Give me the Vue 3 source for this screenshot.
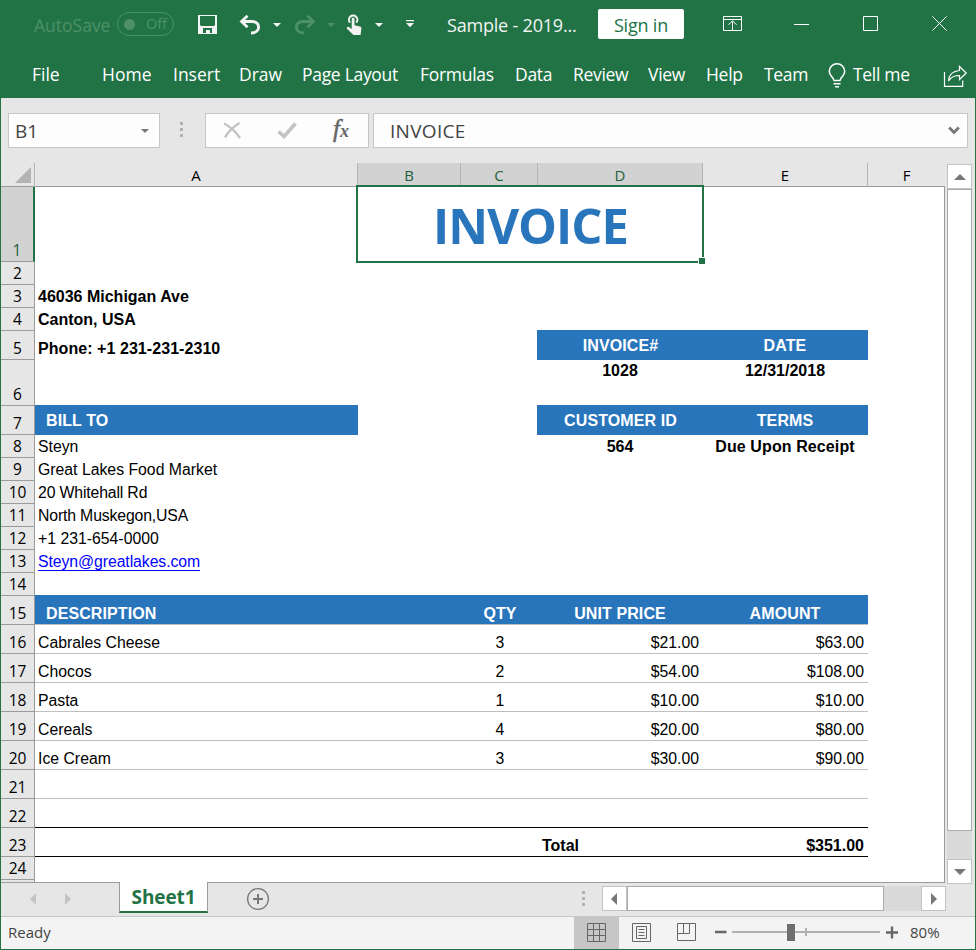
<script setup>
const tabs = [
  { name: 'File', w: 70 }, { name: 'Home', w: 71 }, { name: 'Insert', w: 66 },
  { name: 'Draw', w: 63 }, { name: 'Page Layout', w: 118, tight: true }, { name: 'Formulas', w: 95, tight: true },
  { name: 'Data', w: 58, tight: true }, { name: 'Review', w: 75, tight: true }, { name: 'View', w: 58, tight: true },
  { name: 'Help', w: 58, tight: true }, { name: 'Team', w: 64, tight: true }
]
const columns = ['A', 'B', 'C', 'D', 'E', 'F']

const blank = (n, h = 23) => ({ n, h, cells: [] })
const contact = (n, text, cls = '') => ({ n, h: 23, cells: [{ col: 'a', text, cls }] })
const item = (n, name, qty, price, amount) => ({
  n, h: 29, line: 'thin',
  cells: [
    { col: 'a', text: name }, { col: 'c', text: qty, cls: 'center' },
    { col: 'd', text: price, cls: 'right' }, { col: 'e', text: amount, cls: 'right' }
  ]
})
const rows = [
  { n: 1, h: 75, cells: [{ col: 'bd', text: 'INVOICE', cls: 'title' }] },
  blank(2),
  contact(3, '46036 Michigan Ave', 'bold'),
  contact(4, 'Canton, USA', 'bold'),
  { n: 5, h: 29, cells: [
    { col: 'a', text: 'Phone: +1 231-231-2310', cls: 'bold phone' },
    { col: 'd', text: 'INVOICE#', cls: 'fill edge center mid' },
    { col: 'e', text: 'DATE', cls: 'fill center mid' }
  ] },
  { n: 6, h: 46, cells: [
    { col: 'd', text: '1028', cls: 'bold center top' },
    { col: 'e', text: '12/31/2018', cls: 'bold center top' }
  ] },
  { n: 7, h: 29, cells: [
    { col: 'a', text: 'BILL TO', cls: 'fill indent mid' },
    { col: 'd', text: 'CUSTOMER ID', cls: 'fill edge center mid' },
    { col: 'e', text: 'TERMS', cls: 'fill center mid' }
  ] },
  { n: 8, h: 23, cells: [
    { col: 'a', text: 'Steyn' },
    { col: 'd', text: '564', cls: 'bold center' },
    { col: 'e', text: 'Due Upon Receipt', cls: 'bold center wide' }
  ] },
  contact(9, 'Great Lakes Food Market'),
  contact(10, '20 Whitehall Rd', 'narrow'),
  contact(11, 'North Muskegon,USA', 'narrow'),
  contact(12, '+1 231-654-0000'),
  contact(13, 'Steyn@greatlakes.com', 'mail'),
  blank(14),
  { n: 15, h: 29, line: 'thin', cells: [
    { col: 'a', text: 'DESCRIPTION', cls: 'fill indent' },
    { col: 'b', text: '', cls: 'fill' },
    { col: 'c', text: 'QTY', cls: 'fill center' },
    { col: 'd', text: 'UNIT PRICE', cls: 'fill center' },
    { col: 'e', text: 'AMOUNT', cls: 'fill center' }
  ] },
  item(16, 'Cabrales Cheese', '3', '$21.00', '$63.00'),
  item(17, 'Chocos', '2', '$54.00', '$108.00'),
  item(18, 'Pasta', '1', '$10.00', '$10.00'),
  item(19, 'Cereals', '4', '$20.00', '$80.00'),
  item(20, 'Ice Cream', '3', '$30.00', '$90.00'),
  { n: 21, h: 29, line: 'thin', cells: [] },
  { n: 22, h: 29, line: 'dark', cells: [] },
  { n: 23, h: 29, line: 'dark', cells: [
    { col: 'd', text: 'Total', cls: 'bold total' },
    { col: 'e', text: '$351.00', cls: 'bold right' }
  ] },
  blank(24)
]
</script>

<template>
  <div class="window">
    <header class="titlebar">
      <span class="autosave">AutoSave</span>
      <span class="toggle"><i></i><span>Off</span></span>
      <svg class="save" width="19" height="19" viewBox="0 0 19 19"><path d="M0 0h19v19H0z" fill="#f3f3f3" /><path d="M2 1h15v9l-1 1H3l-1-1zM5 13h9v5h-2v-3H8v3H5z" fill="#217346" /><path d="M9 15h2v3H9z" fill="#f3f3f3"/></svg>
      <svg class="undo" width="22" height="20" viewBox="0 0 22 20" fill="none" stroke="#f3f3f3" stroke-width="3"><path d="M2 6.500h11c9 0 9 11.500-1 11.500" /><path d="M8.500.8 2.500 6.500l6 5.700" stroke-width="2.800" /></svg>
      <svg class="caret c1" width="8" height="4" viewBox="0 0 8 4"><path d="M0 0h8L4 4z" fill="#f3f3f3" /></svg>
      <svg class="redo" width="22" height="20" viewBox="0 0 22 20" fill="none" stroke="#4d9068" stroke-width="3"><path d="M20 6.500H9C0 6.500 0 18 10 18" /><path d="m13.500.8 6 5.700-6 5.700" stroke-width="2.800" /></svg>
      <svg class="caret c2" width="8" height="4" viewBox="0 0 8 4"><path d="M0 0h8L4 4z" fill="#4d9068" /></svg>
      <svg class="touch" width="16" height="22" viewBox="0 0 16 22"><path d="M4 8.600a4.200 4.200 0 1 1 6.300 0" fill="none" stroke="#f3f3f3" stroke-width="2" /><path d="M5.700 5.200c0-1.900 2.800-1.900 2.800 0v6l5.500 1.200c1 .3 1.500.9 1.400 1.900L14.600 21H7.500L1 14.800c-.8-1.200.7-2.400 1.800-1.800l2.900 1.900z" fill="#f3f3f3" /></svg>
      <svg class="caret c3" width="8" height="4" viewBox="0 0 8 4"><path d="M0 0h8L4 4z" fill="#f3f3f3" /></svg>
      <svg class="more" width="8" height="8" viewBox="0 0 8 8"><path d="M0 0h8v1.300H0zM0 3h8L4 7.300z" fill="#f3f3f3" /></svg>
      <span class="doc">Sample - 2019...</span>
      <button class="signin">Sign in</button>
      <svg class="ribbon-opt" width="20" height="16" viewBox="0 0 20 16" fill="none" stroke="#fff"><path d="M.5.5h18v14H.5zM.5 3.500h18M9.500 14V5M5.500 8.800l4-4 4 4" /></svg>
      <svg class="mini" width="15" height="16" viewBox="0 0 15 16"><path d="M0 8.500h15" stroke="#fff" /></svg>
      <svg class="maxi" width="15" height="15" viewBox="0 0 15 15"><path d="M.5.5h14v14H.5z" fill="none" stroke="#fff" /></svg>
      <svg class="close" width="15" height="15" viewBox="0 0 15 15"><path d="m.4.4 14.200 14.200M14.600.4.4 14.600" stroke="#fff" /></svg>
    </header>
    <nav class="ribbon">
      <span v-for="t in tabs" :key="t.name" :style="{ width: t.w + 'px' }" :class="{ tight: t.tight }">{{ t.name }}</span>
      <svg class="bulb" width="18" height="26" viewBox="0 0 18 26" fill="none" stroke="#fff" stroke-width="1.600"><path d="M6 17.500C5.500 14 1.300 13 1.300 8.500a7.700 7.700 0 0 1 15.400 0c0 4.500-4.200 5.500-4.700 9zM5.500 20.700h7M7 23.700h4" /></svg>
      <span class="tell tight">Tell me</span>
      <svg class="share" width="25" height="23" viewBox="0 0 25 23" fill="none" stroke="#fff" stroke-width="1.200"><path d="M1.500 7v14.400h18.200v-6" /><path d="M16.500 1.500 23.200 8l-6.700 6.500v-4C11 10.500 8 12 5.500 16c.5-6 4-10 11-10.500z" /></svg>
    </nav>

    <div class="formula">
      <div class="box name"><span>B1</span><svg width="8" height="4" viewBox="0 0 8 4"><path d="M0 0h8L4 4z" fill="#777" /></svg></div>
      <div class="dots"><i></i><i></i><i></i></div>
      <div class="box tools">
        <svg class="x" width="18" height="17" viewBox="0 0 18 17"><path d="M1 1.500C6 4 13 10 17 16M16.500 1C10 5 5 10 2 15.500" fill="none" stroke="#c3c3c3" stroke-width="2.400" /></svg>
        <svg class="check" width="20" height="17" viewBox="0 0 20 17"><path d="M1.500 9.500 7 14.500 18.500 1.500" fill="none" stroke="#c3c3c3" stroke-width="3.600" /></svg>
        <span class="fx"><b>f</b><small>x</small></span>
      </div>
      <div class="box value"><span>INVOICE</span><svg width="12" height="9" viewBox="0 0 12 9"><path d="m1.200 1.500 4.800 5 4.800-5" fill="none" stroke="#777" stroke-width="2.800" /></svg></div>
    </div>

    <div class="work">
      <main class="sheet">
        <div class="cols">
          <div class="corner"><svg width="16" height="16" viewBox="0 0 16 16"><path d="M16 0v16H0z" fill="#b4b4b4" /></svg></div>
          <div v-for="c in columns" :key="c" class="colhead" :class="{ active: 'BCD'.includes(c) }">{{ c }}</div>
        </div>
        <div class="rows">
          <div v-for="r in rows" :key="r.n" class="row" :style="{ height: r.h + 'px' }">
            <div class="num" :class="{ active: r.n === 1 }">{{ r.n }}</div>
            <div v-for="c in r.cells" :key="c.col" class="cell" :class="['col-' + c.col, c.cls]"><span>{{ c.text }}</span></div>
            <div v-if="r.line" class="rule" :class="r.line"></div>
          </div>
          <div class="row rest"><div class="num"></div></div>
          <div class="selection"><i></i></div>
        </div>
      </main>
      <div class="vscroll">
        <div class="sbtn"><svg width="12" height="6" viewBox="0 0 12 6"><path d="M0 6h12L6 0z" fill="#777" /></svg></div>
        <div class="vthumb"></div>
        <div class="vtrack"></div>
        <div class="sbtn down"><svg width="12" height="6" viewBox="0 0 12 6"><path d="M0 0h12L6 6z" fill="#777" /></svg></div>
      </div>
    </div>

    <div class="sheets">
      <svg class="prev" width="7" height="12" viewBox="0 0 7 12"><path d="M6 0v12L0 6z" fill="#c3c3c3" /></svg>
      <svg class="next" width="7" height="12" viewBox="0 0 7 12"><path d="M0 0v12l6-6z" fill="#c3c3c3" /></svg>
      <div class="tab">Sheet1</div>
      <svg class="add" width="24" height="24" viewBox="0 0 24 24" fill="none" stroke="#777"><circle cx="12" cy="12" r="10.400" stroke-width="1.300" /><path d="M12 7v10M7 12h10" stroke-width="2" /></svg>
      <div class="dots"><i></i><i></i><i></i></div>
      <div class="sbtn left"><svg width="6" height="12" viewBox="0 0 6 12"><path d="M6 0v12L0 6z" fill="#777" /></svg></div>
      <div class="hthumb"></div>
      <div class="htrack"></div>
      <div class="sbtn"><svg width="6" height="12" viewBox="0 0 6 12"><path d="M0 0v12l6-6z" fill="#777" /></svg></div>
    </div>
    <footer class="status">
      <span class="ready">Ready</span>
      <div class="view on"><svg width="19" height="19" viewBox="0 0 19 19" fill="none" stroke="#666"><path d="M.5.5h18v18H.5zM.5 6.500h18M.5 12.500h18M6.500.5v18M12.500.5v18" /></svg></div>
      <div class="view"><svg width="19" height="19" viewBox="0 0 19 19" fill="none" stroke="#666"><path d="M.5.5h18v18H.5zM4.500 3.500h10v12h-10zM6.500 6.500h6M6.500 9.500h6M6.500 12.500h6" /></svg></div>
      <div class="view"><svg width="19" height="19" viewBox="0 0 19 19" fill="none" stroke="#666"><path d="M.5.5h18v17H.5zM6.500.5v10M12.500.5v10M.5 10.500h12" /></svg></div>
      <svg class="zoom" width="184" height="20" viewBox="0 0 184 20"><path d="M1 9h11.500M172 9.500h12M178 3.500v12" stroke="#666" stroke-width="2.400" /><path d="M18 9h148" stroke="#b0b0b0" stroke-width="2" /><path d="M92 5v8" stroke="#b0b0b0" stroke-width="2" /><path d="M73 1h8v17h-8z" fill="#6e6e6e" /></svg>
      <span class="pct">80%</span>
    </footer>
  </div>
</template>

<style>
body { margin: 0; }
</style>

<style scoped>
* { box-sizing: border-box; }
svg { display: block; flex: none; }
.window { width: 976px; height: 950px; border: solid #217346; border-width: 0 1px 1px; background: #e6e6e6; font-family: "Open Sans", "Noto Sans", sans-serif; display: flex; flex-direction: column; overflow: hidden; white-space: nowrap; }

.titlebar { height: 51px; flex: none; background: #217346; color: #f3f3f3; display: flex; align-items: flex-start; font-size: 18px; line-height: 24px; }
.autosave { width: 83px; margin: 13px 0 0 33px; color: #4d9068; font-size: 17.5px; }
.toggle { width: 57px; height: 24px; margin-top: 12px; border: 1px solid #4d9068; border-radius: 12px; color: #4d9068; font-size: 14.5px; line-height: 22px; display: flex; align-items: center; }
.toggle i { width: 11px; height: 11px; border-radius: 50%; background: #4d9068; margin: 0 11px 0 6px; }
.save { margin: 15px 0 0 24px; }
.undo { margin: 15px 0 0 22px; }
.caret { margin-top: 23px; }
.c1 { margin-left: 12px; }
.redo { margin: 15px 0 0 13px; }
.c2 { margin-left: 11px; }
.touch { margin: 14px 0 0 11px; }
.c3 { margin-left: 13px; }
.more { margin: 20px 0 0 23px; }
.doc { width: 151px; margin: 13px 0 0 33px; letter-spacing: -.2px; }
.signin { width: 86px; height: 30px; margin-top: 9px; padding: 0; border: 0; border-radius: 2px; background: #fff; color: #217346; font: 18px/32px "Open Sans", sans-serif; letter-spacing: -.2px; }
.ribbon-opt { margin: 16px 0 0 39px; }
.mini { margin: 16px 0 0 51px; }
.maxi { margin: 16px 0 0 54px; }
.close { margin: 16px 0 0 54px; }

.ribbon { height: 47px; flex: none; background: #217346; color: #fff; padding-left: 31px; display: flex; font-size: 17.5px; line-height: 47px; }
.ribbon span { flex: none; }
.ribbon .tight { letter-spacing: -.3px; }
.bulb { margin-top: 12px; }
.tell { width: 90px; margin-left: 7px; }
.share { margin-top: 14px; }

.formula { height: 65px; flex: none; padding: 15px 7px 0; display: flex; }
.box { height: 35px; flex: none; background: #fdfdfd; border: 1px solid #c6c6c6; display: flex; align-items: center; color: #444; font-size: 19px; }
.name { width: 152px; justify-content: space-between; padding: 0 10px 0 6px; }
.dots { width: 3px; display: flex; flex-direction: column; gap: 3px; }
.dots i { width: 3px; height: 3px; background: #b0b0b0; }
.formula .dots { margin: 9px 22px 0 20px; }
.tools { width: 164px; }
.x { margin-left: 17px; }
.check { margin-left: 36px; }
.fx { margin: -3px 0 0 36px; color: #666; font: italic 25px/30px "Liberation Serif", serif; display: flex; align-items: center; }
.fx b { font-weight: 400; -webkit-text-stroke: .5px #666; }
.fx small { font-size: 18px; font-weight: 700; padding-top: 4px; }
.value { width: 595px; margin-left: 4px; justify-content: space-between; padding: 0 7px 0 16px; }
.value span { letter-spacing: .3px; }

.work { height: 720px; flex: none; display: flex; }
.sheet { width: 944px; height: 720px; }
.cols { height: 24px; display: grid; grid-template-columns: 34px 323px 103px 77px 165px 165px 77px; border-bottom: 1px solid #9b9b9b; }
.corner { border-right: 1px solid #b4b4b4; padding: 4px 0 0 14px; }
.colhead { text-align: center; font-size: 15px; line-height: 24px; border-right: 1px solid #b4b4b4; }
.colhead.active { background: #d2d2d2; color: #1d6039; }
.colhead:last-child { border-right: 0; }
.rows { position: relative; height: 696px; background: #fff; border: solid #9b9b9b; border-width: 0 1px 1px 0; }
.row { display: grid; grid-template-columns: 34px 323px 103px 77px 165px 165px 76px; grid-template-rows: 100%; position: relative; }
.num { grid-area: 1 / 1; border: solid #9b9b9b; border-width: 0 1px 1px 0; background: #e6e6e6; display: flex; align-items: flex-end; justify-content: center; font-size: 15.500px; line-height: 22px; }
.num.active { background: #d2d2d2; color: #1d6039; border-right: 2px solid #217346; }
.rest { height: 2px; overflow: hidden; }
.rest .num { border-bottom: 0; }
.cell { grid-row: 1; display: flex; align-items: flex-end; padding: 0 4px 0 3px; font: 15.800px/22px "Liberation Sans", Arial, sans-serif; color: #000; }
.col-a { grid-column: 2; }
.col-b { grid-column: 3; }
.col-c { grid-column: 4; padding-left: 5px; }
.col-d { grid-column: 5; }
.col-e { grid-column: 6; }
.col-bd { grid-column: 3 / 6; }
.bold { font-weight: 700; font-size: 16px; }
.phone { letter-spacing: .06px; }
.wide { letter-spacing: .1px; }
.narrow { letter-spacing: -.15px; }
.center { justify-content: center; }
.right { justify-content: flex-end; }
.top { align-items: flex-start; }
.mid { align-items: center; padding-top: 2px; }
.fill { background: #2975bc; color: #fff; font-weight: 700; font-size: 16px; letter-spacing: .1px; margin-top: -1px; }
.edge { margin-left: -1px; padding-left: 5px; }
.indent { padding-left: 11px; }
.total { padding-left: 4px; }
.mail span { color: #00f; border-bottom: 1px solid #00f; line-height: 16px; margin-bottom: 2px; letter-spacing: -.07px; }
.cell.title { justify-content: center; align-items: center; padding: 0; font: 700 49px/60px "Open Sans", sans-serif; color: #2975bc; letter-spacing: -1px; }
.rule { grid-row: 1; grid-column: 2 / 7; align-self: end; height: 1px; background: #bfbfbf; z-index: 1; }
.rule.dark { background: #000; }
.selection { position: absolute; left: 355px; top: -2px; width: 348px; height: 78px; border: 2px solid #217346; z-index: 2; }
.selection i { position: absolute; right: -4px; bottom: -4px; width: 8px; height: 8px; background: #217346; border: 1px solid #fff; }

.vscroll { width: 27px; padding: 1px 0 0 2px; display: flex; flex-direction: column; flex: none; }
.sbtn { width: 25px; height: 25px; flex: none; background: #fff; border: 1px solid #c3c3c3; display: flex; align-items: center; justify-content: center; }
.sbtn.left { padding-right: 2px; }
.vthumb { width: 25px; height: 642px; flex: none; background: #fff; border: 1px solid #ababab; }
.vtrack { width: 25px; height: 28px; flex: none; background: #dadada; }
.down { margin-bottom: -1px; position: relative; }

.sheets { height: 34px; flex: none; border-bottom: 1px solid #c6c6c6; display: flex; }
.prev { margin: 10px 0 0 29px; }
.next { margin: 10px 0 0 28px; }
.tab { width: 89px; height: 31px; margin: -1px 0 0 47px; background: #fff; border: solid #9b9b9b; border-width: 0 1px; border-bottom: 2px solid #217346; color: #217346; font-size: 19px; font-weight: 700; line-height: 30px; text-align: center; letter-spacing: -.1px; position: relative; }
.add { margin: 4px 0 0 38px; }
.sheets .dots { margin: 8px 17px 0 312px; }
.sheets .sbtn { margin-top: 3px; }
.hthumb { width: 257px; height: 25px; margin-top: 3px; background: #fff; border: 1px solid #ababab; }
.htrack { width: 37px; height: 25px; margin-top: 3px; background: #dadada; }

.status { flex: 1; background: #f3f3f3; display: flex; color: #444; font-size: 15px; line-height: 31px; }
.ready { width: 566px; margin-left: 7px; }
.view { width: 45px; padding: 6px 0 0 13px; }
.view.on { background: #c6c6c6; }
.zoom { margin: 6px 0 0 5px; }
.pct { margin-left: 12px; }
</style>
